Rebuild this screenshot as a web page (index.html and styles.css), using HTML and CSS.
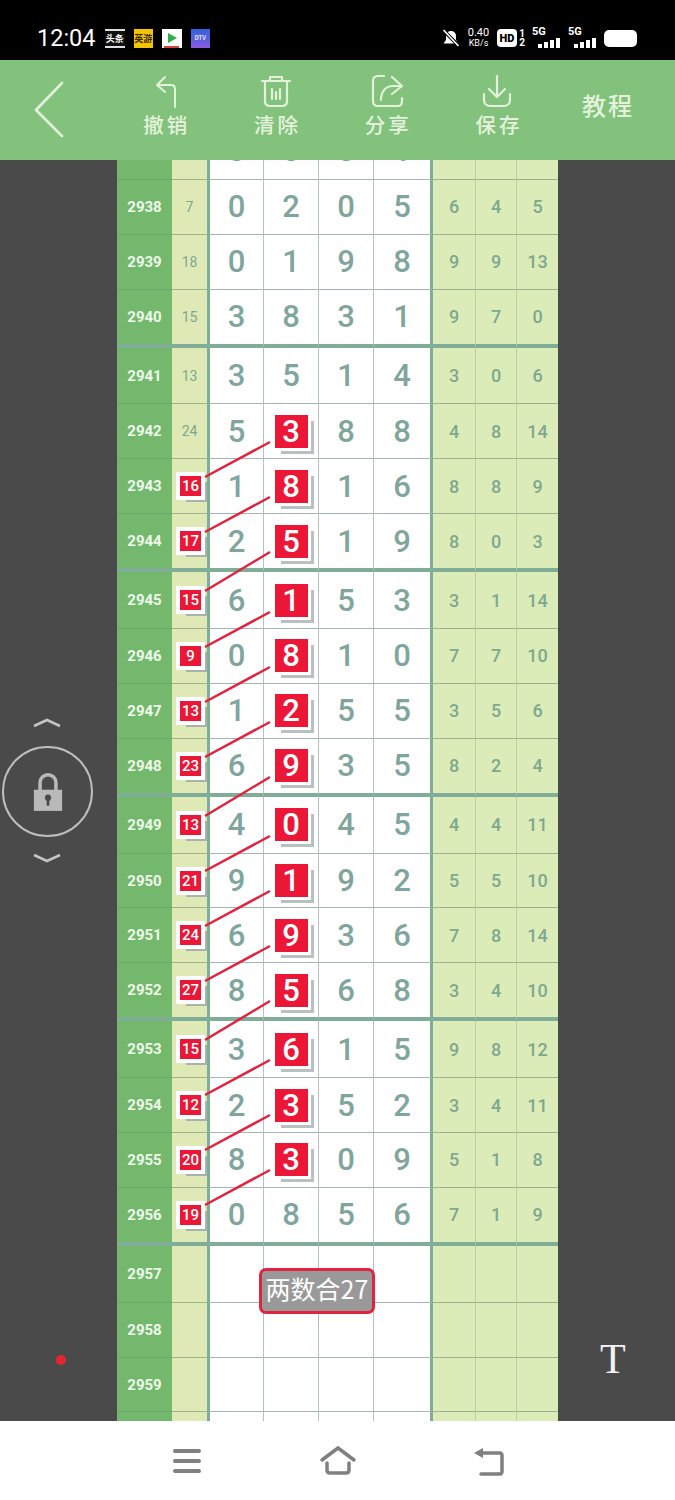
FILE: index.html
```html
<!DOCTYPE html>
<html lang="zh">
<head>
<meta charset="utf-8">
<title>排列五</title>
<link rel="stylesheet" href="styles.css">
</head>
<body>
<div class="phone">
  <header class="status">
    <div class="status-left">
      <span class="time">12:04</span>
      <span class="app app-news">头条</span>
      <span class="app app-game">英游</span>
      <span class="app app-play"><svg width="19" height="19" viewBox="0 0 19 19"><path d="M6 4l9 5-9 5z" fill="#2fae4e"/><path d="M2 18h15" stroke="#d8443a" stroke-width="2"/></svg></span>
      <span class="app app-blue">DTV</span>
    </div>
    <div class="status-right">
      <svg class="bell" width="18" height="18" viewBox="0 0 18 18"><path d="M9 2c3 0 5 2.300 5 5v4l2.500 3.500h-15L4 11V7c0-2.700 2-5 5-5z" fill="#fff"/><path d="M1.500 1.500l15 15" stroke="#000" stroke-width="3.500"/><path d="M1.500 1l15 16" stroke="#fff" stroke-width="1.600"/></svg>
      <span class="speed"><b>0.40</b><b>KB/s</b></span>
      <span class="hd">HD</span>
      <span class="sim"><b>1</b><b>2</b></span>
      <span class="net"><b>5G</b><i class="bars"><i class="b1"></i><i class="b2"></i><i class="b3"></i><i class="b4"></i></i></span>
      <span class="net"><b>5G</b><i class="bars"><i class="b1"></i><i class="b2"></i><i class="b3"></i><i class="b4"></i></i></span>
      <span class="battery"></span>
    </div>
  </header>

  <nav class="toolbar">
    <div class="back"><svg width="34" height="60" viewBox="0 0 34 60"><path d="M30 3L4 30l26 26" fill="none" stroke="#e4f2dc" stroke-width="2.600" stroke-linecap="round" stroke-linejoin="round"/></svg></div>
    <div class="tool">
      <svg width="34" height="34" viewBox="0 0 34 34"><path d="M17 3l-8 8 8 7M10 11h13c3 0 4 2 4 4v18" fill="none" stroke="#e4f2dc" stroke-width="2" stroke-linecap="round" stroke-linejoin="round"/></svg>
      <span>撤销</span>
    </div>
    <div class="tool">
      <svg width="34" height="34" viewBox="0 0 34 34"><path d="M3 7h28M11 7V3h12v4M6 8v19c0 3 2 5 5 5h12c3 0 5-2 5-5V8M13 15v10M17 18v7M21 15v10" fill="none" stroke="#e4f2dc" stroke-width="2.200" stroke-linecap="round" stroke-linejoin="round"/></svg>
      <span>清除</span>
    </div>
    <div class="tool">
      <svg width="34" height="34" viewBox="0 0 34 34"><path d="M14 2H8C5 2 3 4 3 7v20c0 3 2 5 5 5h20c3 0 4-2 4-5v-3M22 3l10 9-10 8M31 12h-8c-7 0-12 5-12 14" fill="none" stroke="#e4f2dc" stroke-width="2.200" stroke-linecap="round" stroke-linejoin="round"/></svg>
      <span>分享</span>
    </div>
    <div class="tool">
      <svg width="34" height="34" viewBox="0 0 34 34"><path d="M17 2v20M9 15l8 8 8-8M4 20v6c0 4 3 6 6 6h14c3 0 6-2 6-6v-6" fill="none" stroke="#e4f2dc" stroke-width="2.200" stroke-linecap="round" stroke-linejoin="round"/></svg>
      <span>保存</span>
    </div>
    <div class="tool tool-text"><span>教程</span></div>
  </nav>

  <main class="stage">
    <aside class="side">
      <svg class="chev" width="30" height="12" viewBox="0 0 30 12"><path d="M2 9l13-6 13 6" fill="none" stroke="#c4c4c4" stroke-width="2.500"/></svg>
      <div class="lock">
        <svg width="34" height="44" viewBox="0 0 34 44"><path d="M8 22v-10c0-5 4-9 9-9s9 4 9 9v10" fill="none" stroke="#b9b9b9" stroke-width="4"/><rect x="1" y="20" width="32" height="24" fill="#b9b9b9"/><circle cx="17" cy="29" r="3.500" fill="#4a4a4a"/><rect x="15.500" y="30" width="3" height="8" fill="#4a4a4a"/></svg>
      </div>
      <svg class="chev" width="30" height="12" viewBox="0 0 30 12"><path d="M2 3l13 6 13-6" fill="none" stroke="#c4c4c4" stroke-width="2.500"/></svg>
    </aside>

    <section class="sheet">
      <div class="row first"><div class="n">2937</div><div class="s">4</div><div class="d">0</div><div class="d">0</div><div class="d">0</div><div class="d">1</div><div class="r">1</div><div class="r">0</div><div class="r">1</div></div>
      <div class="row"><div class="n">2938</div><div class="s">7</div><div class="d">0</div><div class="d">2</div><div class="d">0</div><div class="d">5</div><div class="r">6</div><div class="r">4</div><div class="r">5</div></div>
      <div class="row"><div class="n">2939</div><div class="s">18</div><div class="d">0</div><div class="d">1</div><div class="d">9</div><div class="d">8</div><div class="r">9</div><div class="r">9</div><div class="r">13</div></div>
      <div class="row last"><div class="n">2940</div><div class="s">15</div><div class="d">3</div><div class="d">8</div><div class="d">3</div><div class="d">1</div><div class="r">9</div><div class="r">7</div><div class="r">0</div></div>

      <div class="row first"><div class="n">2941</div><div class="s">13</div><div class="d">3</div><div class="d">5</div><div class="d">1</div><div class="d">4</div><div class="r">3</div><div class="r">0</div><div class="r">6</div></div>
      <div class="row"><div class="n">2942</div><div class="s">24</div><div class="d">5</div><div class="d"><b class="hit">3</b></div><div class="d">8</div><div class="d">8</div><div class="r">4</div><div class="r">8</div><div class="r">14</div></div>
      <div class="row"><div class="n">2943</div><div class="s"><b class="tag">16</b></div><div class="d">1</div><div class="d"><b class="hit">8</b></div><div class="d">1</div><div class="d">6</div><div class="r">8</div><div class="r">8</div><div class="r">9</div></div>
      <div class="row last"><div class="n">2944</div><div class="s"><b class="tag">17</b></div><div class="d">2</div><div class="d"><b class="hit">5</b></div><div class="d">1</div><div class="d">9</div><div class="r">8</div><div class="r">0</div><div class="r">3</div></div>

      <div class="row first"><div class="n">2945</div><div class="s"><b class="tag">15</b></div><div class="d">6</div><div class="d"><b class="hit">1</b></div><div class="d">5</div><div class="d">3</div><div class="r">3</div><div class="r">1</div><div class="r">14</div></div>
      <div class="row"><div class="n">2946</div><div class="s"><b class="tag">9</b></div><div class="d">0</div><div class="d"><b class="hit">8</b></div><div class="d">1</div><div class="d">0</div><div class="r">7</div><div class="r">7</div><div class="r">10</div></div>
      <div class="row"><div class="n">2947</div><div class="s"><b class="tag">13</b></div><div class="d">1</div><div class="d"><b class="hit">2</b></div><div class="d">5</div><div class="d">5</div><div class="r">3</div><div class="r">5</div><div class="r">6</div></div>
      <div class="row last"><div class="n">2948</div><div class="s"><b class="tag">23</b></div><div class="d">6</div><div class="d"><b class="hit">9</b></div><div class="d">3</div><div class="d">5</div><div class="r">8</div><div class="r">2</div><div class="r">4</div></div>

      <div class="row first"><div class="n">2949</div><div class="s"><b class="tag">13</b></div><div class="d">4</div><div class="d"><b class="hit">0</b></div><div class="d">4</div><div class="d">5</div><div class="r">4</div><div class="r">4</div><div class="r">11</div></div>
      <div class="row"><div class="n">2950</div><div class="s"><b class="tag">21</b></div><div class="d">9</div><div class="d"><b class="hit">1</b></div><div class="d">9</div><div class="d">2</div><div class="r">5</div><div class="r">5</div><div class="r">10</div></div>
      <div class="row"><div class="n">2951</div><div class="s"><b class="tag">24</b></div><div class="d">6</div><div class="d"><b class="hit">9</b></div><div class="d">3</div><div class="d">6</div><div class="r">7</div><div class="r">8</div><div class="r">14</div></div>
      <div class="row last"><div class="n">2952</div><div class="s"><b class="tag">27</b></div><div class="d">8</div><div class="d"><b class="hit">5</b></div><div class="d">6</div><div class="d">8</div><div class="r">3</div><div class="r">4</div><div class="r">10</div></div>

      <div class="row first"><div class="n">2953</div><div class="s"><b class="tag">15</b></div><div class="d">3</div><div class="d"><b class="hit">6</b></div><div class="d">1</div><div class="d">5</div><div class="r">9</div><div class="r">8</div><div class="r">12</div></div>
      <div class="row"><div class="n">2954</div><div class="s"><b class="tag">12</b></div><div class="d">2</div><div class="d"><b class="hit">3</b></div><div class="d">5</div><div class="d">2</div><div class="r">3</div><div class="r">4</div><div class="r">11</div></div>
      <div class="row"><div class="n">2955</div><div class="s"><b class="tag">20</b></div><div class="d">8</div><div class="d"><b class="hit">3</b></div><div class="d">0</div><div class="d">9</div><div class="r">5</div><div class="r">1</div><div class="r">8</div></div>
      <div class="row last"><div class="n">2956</div><div class="s"><b class="tag">19</b></div><div class="d">0</div><div class="d">8</div><div class="d">5</div><div class="d">6</div><div class="r">7</div><div class="r">1</div><div class="r">9</div></div>

      <div class="row first"><div class="n">2957</div><div class="s"></div><div class="d"></div><div class="d"></div><div class="d"></div><div class="d"></div><div class="r"></div><div class="r"></div><div class="r"></div></div>
      <div class="row"><div class="n">2958</div><div class="s"></div><div class="d"></div><div class="d"></div><div class="d"></div><div class="d"></div><div class="r"></div><div class="r"></div><div class="r"></div></div>
      <div class="row"><div class="n">2959</div><div class="s"></div><div class="d"></div><div class="d"></div><div class="d"></div><div class="d"></div><div class="r"></div><div class="r"></div><div class="r"></div></div>
      <div class="row last"><div class="n"></div><div class="s"></div><div class="d"></div><div class="d"></div><div class="d"></div><div class="d"></div><div class="r"></div><div class="r"></div><div class="r"></div></div>

      <svg class="links" width="441" height="1300" viewBox="0 0 441 1300">
        <path d="M153 320L88 355M153 375L88 410M153 430L88 469M153 490L88 525M153 545L88 580M153 600L88 635M153 655L88 694M153 714L88 749M153 769L88 804M153 824L88 859M153 879L88 918M153 938L88 973M153 993L88 1028M153 1048L88 1083" fill="none" stroke="#e2233f" stroke-width="2.500"/>
      </svg>
      <div class="note">两数合27</div>
    </section>

    <aside class="side side-right"></aside>
    <span class="dot"></span>
    <span class="type">T</span>
  </main>

  <footer class="navbar">
    <svg width="32" height="28" viewBox="0 0 32 28"><path d="M4 4h24M4 14h24M4 24h24" stroke="#808080" stroke-width="4" stroke-linecap="round"/></svg>
    <svg width="38" height="32" viewBox="0 0 38 32"><path d="M3 15L19 3l16 12" fill="none" stroke="#808080" stroke-width="3.500" stroke-linecap="round"/><path d="M8 18v7c0 2 1 3 3 3h16c2 0 3-1 3-3v-7" fill="none" stroke="#808080" stroke-width="3.500" stroke-linecap="round"/></svg>
    <svg width="32" height="30" viewBox="0 0 32 30"><path d="M8 7h20c1 0 2 1 2 2v16c0 2-1 3-2 3H9" fill="none" stroke="#808080" stroke-width="3.500" stroke-linecap="round"/><path d="M2 7l9-5v10z" fill="#808080"/></svg>
  </footer>
</div>
</body>
</html>
```

FILE: styles.css
```css
* { box-sizing: border-box; }
html, body { margin: 0; padding: 0; }
body { font-family: "Roboto", "Noto Sans CJK SC", sans-serif; background: #4a4a4a; }

.phone { width: 675px; height: 1500px; display: flex; flex-direction: column; overflow: hidden; }

/* status bar */
.status { height: 60px; flex: none; background: #000; color: #fff; display: flex; justify-content: space-between; align-items: center; padding: 16px 38px 0 37px; }
.status-left, .status-right { display: flex; align-items: center; }
.time { font-family: "Roboto", sans-serif; font-size: 23.500px; width: 68px; }
.app { width: 19.500px; height: 19px; margin-right: 9px; display: flex; align-items: center; justify-content: center; font-family: "Noto Sans CJK SC", sans-serif; font-size: 9px; font-weight: 700; line-height: 1; overflow: hidden; }
.app-news { background: #111; color: #fff; border-top: 2px solid #ddd; border-bottom: 2px solid #ddd; }
.app-game { background: #f5c400; color: #3a2a00; }
.app-play { background: #fff; }
.app-blue { background: linear-gradient(#2d63dc, #8a5ae0); color: #dfe6ff; font-size: 6px; }
.bell { margin-right: 6px; }
.speed { display: flex; flex-direction: column; width: 25px; font-family: "Roboto", sans-serif; line-height: 10px; text-align: center; margin-right: 6px; }
.speed b { font-weight: 400; font-size: 11px; }
.speed b + b { font-size: 9px; }
.hd { width: 20px; height: 18px; border-radius: 4px; background: #fff; color: #000; font-family: "Roboto", sans-serif; font-size: 11px; font-weight: 900; display: flex; align-items: center; justify-content: center; }
.sim { width: 8px; display: flex; flex-direction: column; font-family: "Roboto", sans-serif; font-size: 10px; line-height: 9px; margin-left: 1px; margin-right: 6px; }
.sim b { font-weight: 700; text-align: center; }
.net { width: 36px; height: 20px; position: relative; font-family: "Roboto", sans-serif; }
.net b { position: absolute; left: 0; top: -2px; font-size: 11px; line-height: 12px; font-weight: 700; }
.bars { position: absolute; left: 6px; bottom: 0; display: flex; align-items: flex-end; gap: 2px; }
.bars i { display: block; width: 4px; background: #fff; }
.bars .b1 { height: 4px; }
.bars .b2 { height: 6px; }
.bars .b3 { height: 8px; }
.bars .b4 { height: 10px; }
.battery { width: 33px; height: 17px; background: #fff; border-radius: 5px; }

/* toolbar */
.toolbar { height: 100px; flex: none; background: #82c27c; display: flex; align-items: stretch; color: #e4f2dc; }
.back { width: 110px; padding: 20px 0 0 32px; flex: none; }
.tool { width: 110.700px; flex: none; display: flex; flex-direction: column; align-items: center; padding-top: 14px; font-family: "Noto Sans CJK SC", sans-serif; }
.tool svg { display: block; height: 34px; }
.tool span { font-size: 20.500px; font-weight: 500; letter-spacing: 3px; margin-right: -3px; line-height: 26px; margin-top: 3px; }
.tool-text { justify-content: center; padding: 0 0 10px; }
.tool-text span { font-size: 24px; letter-spacing: 2px; margin-right: 0; line-height: 30px; margin-top: 0; }

/* stage */
.stage { flex: 1; min-height: 0; position: relative; display: flex; overflow: hidden; background: #4a4a4a; }
.side { width: 117px; flex: none; display: flex; flex-direction: column; justify-content: center; align-items: center; }
.side:first-child { width: 117px; align-items: flex-start; padding-left: 2px; }
.chev { display: block; margin-left: 30px; }
.lock { width: 91px; height: 91px; margin: 17px 0 15px; border: 2px solid #bdbdbd; border-radius: 50%; display: flex; align-items: center; justify-content: center; }
.lock svg { width: 30px; height: 39px; }

/* sheet */
.sheet { width: 441px; flex: none; margin-top: -37px; align-self: flex-start; position: relative; }
.row { display: grid; grid-template-columns: 55px 38px 54px 55px 55px 59px 43px 41px 41px; height: 54.900px; }
.row.first { height: 56.900px; }
.row.last { height: 57.900px; }
.row > div { display: flex; align-items: center; justify-content: center; border-bottom: 1px solid #a7b6b3; }
.row.last > div { border-bottom: 4px solid #80ad98; }

.n { background: #74b86d; color: #eff8ea; font-size: 15px; font-weight: 700; }
.row > .n { border-bottom-color: #6fa96a; }
.s { background: #dfe9b5; color: #7fa692; font-size: 14px; border-right: 3px solid #80ad98; }
.d { background: #fff; color: #7fa59c; font-size: 31px; font-weight: 500; border-right: 1px solid #b3c2c1; }
.d:nth-child(6) { border-right: 3px solid #80ad98; }
.r { background: #dcecb8; color: #7fa88f; font-size: 18px; font-weight: 500; border-right: 1px solid #b9d2a3; }
.r:last-child { border-right: 0; }
.row > .r, .row > .s { border-bottom-color: #9db28f; }

.hit { width: 33px; height: 33px; background: #ec1636; color: #fff; font-weight: 500; font-size: 31px; display: flex; align-items: center; justify-content: center; box-shadow: 0 0 0 3px #fff, 6px 6px 0 0 #b9c0c0; }
.tag { width: 21px; height: 20px; background: #ec1636; color: #fff; font-weight: 500; font-size: 15px; display: flex; align-items: center; justify-content: center; box-shadow: 0 0 0 4px #fff, 6px 6px 0 0 #a9b3ab; margin-left: 2px; }

.links { position: absolute; left: 0; top: -1px; pointer-events: none; }
.note { position: absolute; left: 142px; top: 1145px; width: 116px; height: 46px; background: #999; border: 3px solid #e2233f; border-radius: 7px; color: #fff; font-family: "Noto Sans CJK SC", sans-serif; font-size: 25px; line-height: 34px; text-align: center; white-space: nowrap; }

.dot { position: absolute; left: 56px; top: 1195px; width: 10px; height: 10px; border-radius: 50%; background: #e8262f; }
.type { position: absolute; left: 600px; top: 1174px; font-family: "Liberation Serif", serif; font-size: 42px; line-height: 50px; color: #f2f2f2; }

/* nav bar */
.navbar { height: 79px; flex: none; background: #fff; display: flex; align-items: center; }
.navbar svg:nth-child(1) { margin-left: 171px; }
.navbar svg:nth-child(2) { margin-left: 116px; }
.navbar svg:nth-child(3) { margin-left: 115px; }
```
